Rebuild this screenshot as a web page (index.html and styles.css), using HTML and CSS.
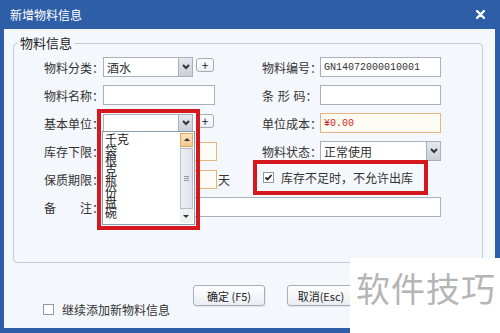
FILE: index.html
```html
<!DOCTYPE html>
<html>

<head>
    <meta charset="UTF-8">
    <title>新增物料信息</title>
    <link rel="stylesheet" href="styles.css">
</head>

<body>
    <div class="window">
        <div class="titlebar">
            <span class="title">新增物料信息</span>
            <svg class="close" width="9" height="9" viewBox="0 0 9 9">
                <path d="M1 1L8 8M8 1L1 8" stroke="#fff" stroke-width="2.4" stroke-linecap="round" />
            </svg>
        </div>

        <div class="content">
            <fieldset class="group">
                <legend>物料信息</legend>
                <div class="rows">
                    <div class="row">
                        <div class="cell left">
                            <label>物料分类：</label>
                            <div class="select short"><span>酒水</span><i class="arrow"><svg width="8" height="6" viewBox="0 0 8 6"><path d="M1 1L4 4L7 1" fill="none" stroke="#333" stroke-width="2" /></svg></i></div>
                            <span class="plus">+</span>
                        </div>
                        <div class="cell right">
                            <label>物料编号：</label>
                            <div class="box wide mono">GN14072000010001</div>
                        </div>
                    </div>
                    <div class="row">
                        <div class="cell left">
                            <label>物料名称：</label>
                            <div class="box name"></div>
                        </div>
                        <div class="cell right">
                            <label class="spaced">条 形 码：</label>
                            <div class="box wide"></div>
                        </div>
                    </div>
                    <div class="row">
                        <div class="cell left">
                            <label>基本单位：</label>
                            <div class="select short unit"><span></span><i class="arrow"><svg width="8" height="6" viewBox="0 0 8 6"><path d="M1 1L4 4L7 1" fill="none" stroke="#333" stroke-width="2" /></svg></i></div>
                            <span class="plus">+</span>
                        </div>
                        <div class="cell right">
                            <label>单位成本：</label>
                            <div class="box wide warn mono price">¥0.00</div>
                        </div>
                    </div>
                    <div class="row">
                        <div class="cell left">
                            <label>库存下限：</label>
                            <div class="box small warn"></div>
                        </div>
                        <div class="cell right">
                            <label>物料状态：</label>
                            <div class="select wide"><span>正常使用</span><i class="arrow"><svg width="8" height="6" viewBox="0 0 8 6"><path d="M1 1L4 4L7 1" fill="none" stroke="#333" stroke-width="2" /></svg></i></div>
                        </div>
                    </div>
                    <div class="row">
                        <div class="cell left">
                            <label>保质期限：</label>
                            <div class="box small warn"></div>
                            <span class="unit-text">天</span>
                        </div>
                        <div class="cell right">
                            <span class="check checked"><svg width="9" height="9" viewBox="0 0 9 9"><path d="M1.5 4.5L3.5 6.5L7.5 2" fill="none" stroke="#222" stroke-width="1.8" /></svg></span>
                            <span class="check-text">库存不足时，不允许出库</span>
                        </div>
                    </div>
                    <div class="row">
                        <div class="cell full">
                            <label>备&emsp;&emsp;注：</label>
                            <div class="box memo"></div>
                        </div>
                    </div>
                </div>
            </fieldset>

            <div class="footer">
                <div class="again">
                    <span class="check"></span>
                    <span class="check-text">继续添加新物料信息</span>
                </div>
                <span class="btn ok">确定 (F5)</span>
                <span class="btn cancel">取消(Esc)</span>
            </div>
        </div>

        <ul class="droplist">
            <li>千克</li>
            <li>袋</li>
            <li>根</li>
            <li>克</li>
            <li>瓶</li>
            <li>份</li>
            <li>盘</li>
            <li>碗</li>
            <div class="scroll">
                <span class="sb-up"></span>
                <span class="sb-thumb"></span>
                <span class="sb-down"></span>
            </div>
        </ul>

        <div class="mark mark-unit"></div>
        <div class="mark mark-stock"></div>

        <div class="watermark">软件技巧</div>
    </div>
</body>

</html>
```

FILE: styles.css
```css
body {
    margin: 0;
    font-family: "Noto Sans CJK SC", "Liberation Sans", sans-serif;
    font-size: 12px;
    color: #333;
}

.window {
    position: relative;
    width: 500px;
    height: 333px;
    box-sizing: border-box;
    padding: 0 5px 5px 4px;
    background: #2e5ea8;
    display: flex;
    flex-direction: column;
    overflow: hidden;
}

.titlebar {
    height: 29px;
    flex: none;
    display: flex;
    align-items: center;
    justify-content: space-between;
    padding: 0 10px 0 6px;
}

.title {
    color: #fff;
    font-size: 12px;
}

.content {
    flex: 1;
    background: #f4f7fb;
    padding: 6px 12px 0 9px;
}

fieldset.group {
    margin: 0;
    padding: 6px 10px 45px 4px;
    border: 1px solid #c6ccd4;
    border-radius: 4px;
}

legend {
    padding: 0 2px;
    font-size: 13px;
    line-height: 16px;
    color: #222;
}

.rows {
    padding-left: 26px;
}

.row {
    display: flex;
    height: 20px;
    margin-bottom: 8px;
}

.row:last-child {
    margin-bottom: 0;
}

.cell {
    display: flex;
    align-items: center;
}

.left {
    width: 218px;
}

.left label,
.full label {
    width: 59px;
}

.right label {
    width: 58px;
}

label {
    white-space: nowrap;
    flex: none;
}

label.spaced {
    word-spacing: 1px;
}

.box,
.select {
    box-sizing: border-box;
    height: 20px;
    border: 1px solid #a9b0ba;
    background: #fff;
    display: flex;
    align-items: center;
    padding-left: 3px;
}

.select {
    justify-content: space-between;
    padding-right: 0;
}

.select.short {
    width: 90px;
}

.select.unit {
    height: 18px;
}

.arrow {
    width: 14px;
    height: 100%;
    box-sizing: border-box;
    border-left: 1px solid #a9b0ba;
    background: linear-gradient(#e4e8ee, #c9cfd9);
    display: flex;
    align-items: center;
    justify-content: center;
}

.plus {
    margin-left: 3px;
    width: 18px;
    height: 14px;
    box-sizing: border-box;
    border: 1px solid #a3abb6;
    border-radius: 3px;
    background: linear-gradient(#fff, #eceff3);
    font-size: 12px;
    line-height: 11px;
    text-align: center;
    color: #222;
    margin-top: -4px;
}

.box.name {
    width: 112px;
}

.box.wide,
.select.wide {
    width: 121px;
}

.box.small {
    width: 114px;
    height: 19px;
}

.box.memo {
    width: 338px;
}

.warn {
    border-color: #e8b37c;
    background: #fffcf6;
}

.mono {
    font-family: "Liberation Mono", monospace;
    font-size: 10px;
}

.price {
    color: #d21e1e;
}

.unit-text {
    margin-left: 1px;
    font-size: 12px;
}

.check {
    width: 11px;
    height: 11px;
    box-sizing: border-box;
    border: 1px solid #8e97a3;
    background: #fff;
    display: inline-flex;
    align-items: center;
    justify-content: center;
    flex: none;
}

.right .check {
    margin-left: 1px;
    margin-top: -4px;
}

.right .check-text {
    margin-left: 7px;
    margin-top: -4px;
}

.footer {
    display: flex;
    align-items: flex-start;
    margin-top: 22px;
    padding-left: 30px;
}

.again {
    width: 150px;
    display: flex;
    align-items: center;
    margin-top: 16px;
}

.again .check-text {
    margin-left: 8px;
}

.btn {
    box-sizing: border-box;
    height: 21px;
    border: 1px solid #a6aeb9;
    border-radius: 3px;
    background: linear-gradient(#fff, #eaedf2);
    box-shadow: 1px 1px 1px rgba(0, 0, 0, .08);
    display: flex;
    align-items: center;
    justify-content: center;
    font-size: 11px;
    color: #222;
}

.btn.ok {
    width: 72px;
    margin-right: 22px;
}

.btn.cancel {
    width: 68px;
}

.droplist {
    position: absolute;
    left: 102px;
    top: 131px;
    width: 93px;
    height: 94px;
    box-sizing: border-box;
    margin: 0;
    padding: 2px 0 0 2px;
    list-style: none;
    background: #fff;
    border: 1px solid #8a9bb0;
    overflow: hidden;
}

.droplist li {
    font-size: 12px;
    line-height: 10.5px;
    color: #222;
}

.scroll {
    position: absolute;
    right: 1px;
    top: 1px;
    bottom: 1px;
    width: 13px;
    background: #f0f1f3;
    display: flex;
    flex-direction: column;
}

.sb-up {
    height: 14px;
    border: 1px solid #dba866;
    box-sizing: border-box;
    background: linear-gradient(#fbe3bf, #f2c88f);
    position: relative;
}

.sb-up::after,
.sb-down::after {
    content: "";
    position: absolute;
    left: 3px;
    top: 4px;
    border-left: 3px solid transparent;
    border-right: 3px solid transparent;
}

.sb-up::after {
    border-bottom: 3px solid #333;
}

.sb-thumb {
    flex: 1;
    margin: 1px 0 14px;
    border: 1px solid #b6bfcb;
    box-sizing: border-box;
    background-image: linear-gradient(#8d96a2, #8d96a2), linear-gradient(#8d96a2, #8d96a2), linear-gradient(#8d96a2, #8d96a2), linear-gradient(90deg, #eef1f5, #dde2e9);
    background-size: 5px 1px, 5px 1px, 5px 1px, 100% 100%;
    background-position: 3px 27px, 3px 29px, 3px 31px, 0 0;
    background-repeat: no-repeat;
}

.sb-down {
    height: 13px;
    position: relative;
    margin-top: -13px;
}

.sb-down::after {
    top: 5px;
    border-top: 3px solid #333;
}

.mark {
    position: absolute;
    border: 4px solid #d5181e;
}

.mark-unit {
    left: 97px;
    top: 109px;
    width: 95px;
    height: 113px;
}

.mark-stock {
    left: 253px;
    top: 160px;
    width: 167px;
    height: 27px;
}

.watermark {
    position: absolute;
    left: 350px;
    top: 258px;
    width: 150px;
    height: 75px;
    background: #fff;
    box-sizing: border-box;
    padding-left: 6px;
    font-size: 34px;
    line-height: 60px;
    letter-spacing: 1px;
    color: #b5b5b5;
    white-space: nowrap;
    overflow: hidden;
}
```
